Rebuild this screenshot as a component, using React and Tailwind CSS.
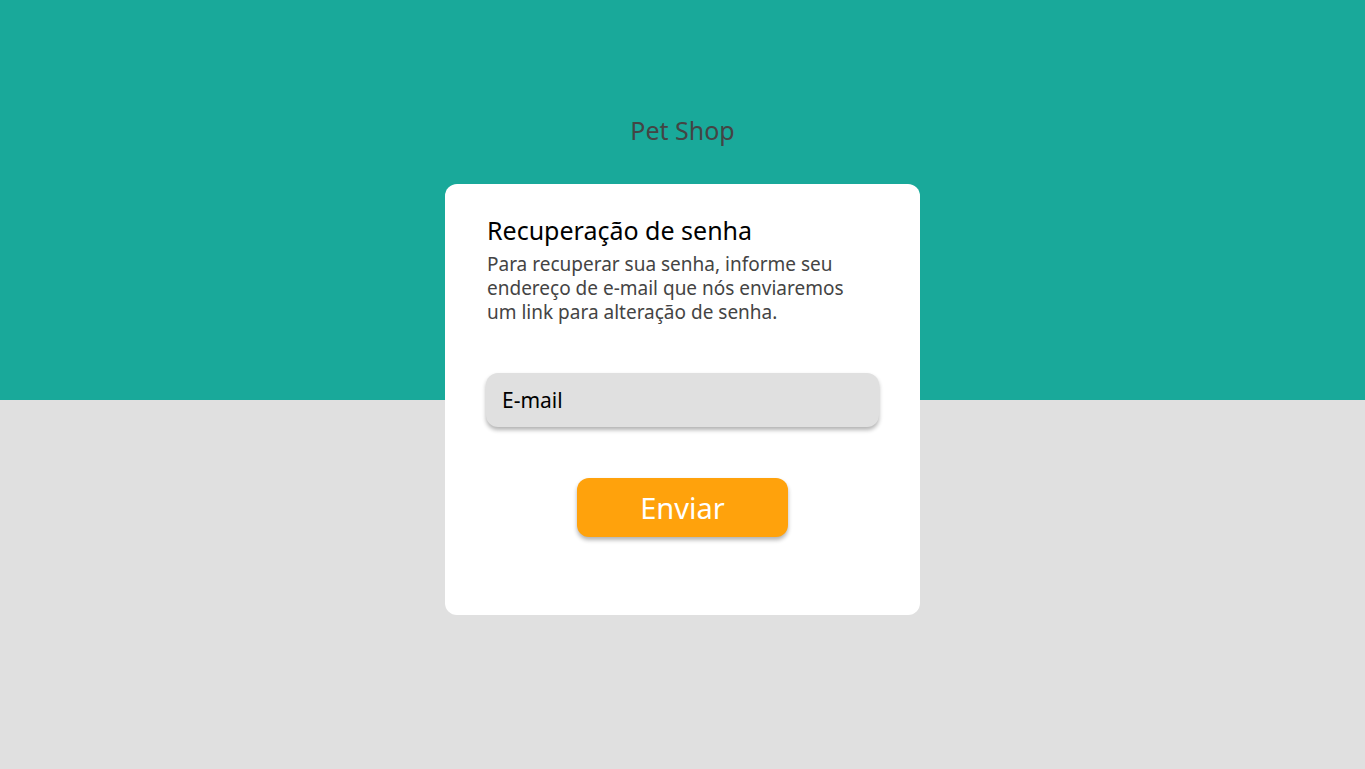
export default function App() {
  return (
    <div
      className="min-h-[769px] w-full flex flex-col items-center bg-[linear-gradient(to_bottom,#19a99a_0,#19a99a_400px,#e0e0e0_400px,#e0e0e0_100%)]"
      style={{ fontFamily: '"Noto Sans", "Open Sans", sans-serif' }}
    >
      <div className="pt-[114px] h-[184px] text-[25px] leading-[32px] text-[#444444]">Pet Shop</div>
      <div className="w-[475px] h-[431px] bg-white rounded-[12px] px-[42px] pt-[30px] flex flex-col">
        <h1 className="text-[25px] leading-[32px] text-black">Recuperação de senha</h1>
        <p className="mt-[6px] text-[19px] leading-[24px] text-[#444444] w-[380px]">
          Para recuperar sua senha, informe seu endereço de e-mail que nós enviaremos um link para alteração de senha.
        </p>
        <input
          type="text"
          placeholder="E-mail"
          className="mt-[49px] -ml-[1px] w-[393px] h-[54px] rounded-[12px] bg-[#e0e0e0] px-[16px] text-[21px] text-black placeholder:text-black outline-none shadow-[0_3px_4px_rgba(0,0,0,0.3)]"
        />
        <div className="flex justify-center mt-[51px]">
          <button className="w-[211px] h-[59px] rounded-[12px] bg-[#ffa20c] text-white text-[29px] shadow-[0_3px_4px_rgba(0,0,0,0.3)]">
            Enviar
          </button>
        </div>
      </div>
    </div>
  );
}
